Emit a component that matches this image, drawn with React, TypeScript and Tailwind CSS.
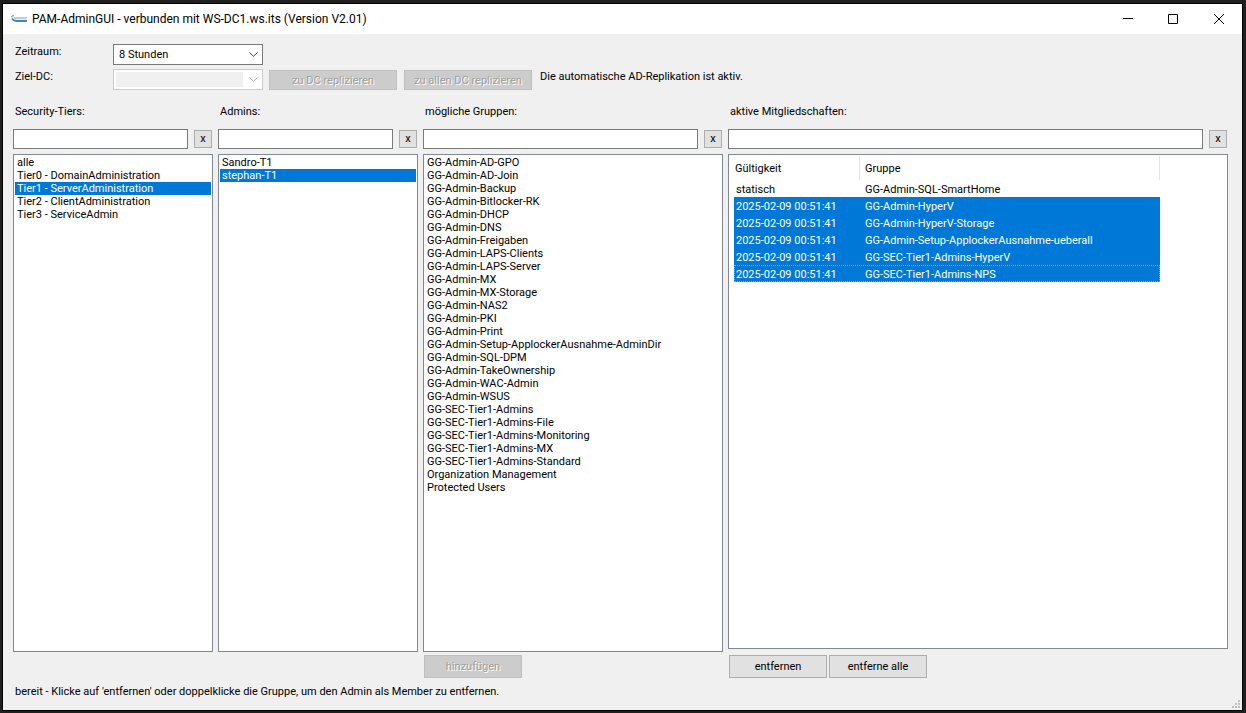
import React, { useState } from 'react'
import clsx from 'clsx'

const tiers = [
  'alle',
  'Tier0 - DomainAdministration',
  'Tier1 - ServerAdministration',
  'Tier2 - ClientAdministration',
  'Tier3 - ServiceAdmin',
]

const admins = ['Sandro-T1', 'stephan-T1']

const groups = [
  'GG-Admin-AD-GPO',
  'GG-Admin-AD-Join',
  'GG-Admin-Backup',
  'GG-Admin-Bitlocker-RK',
  'GG-Admin-DHCP',
  'GG-Admin-DNS',
  'GG-Admin-Freigaben',
  'GG-Admin-LAPS-Clients',
  'GG-Admin-LAPS-Server',
  'GG-Admin-MX',
  'GG-Admin-MX-Storage',
  'GG-Admin-NAS2',
  'GG-Admin-PKI',
  'GG-Admin-Print',
  'GG-Admin-Setup-ApplockerAusnahme-AdminDir',
  'GG-Admin-SQL-DPM',
  'GG-Admin-TakeOwnership',
  'GG-Admin-WAC-Admin',
  'GG-Admin-WSUS',
  'GG-SEC-Tier1-Admins',
  'GG-SEC-Tier1-Admins-File',
  'GG-SEC-Tier1-Admins-Monitoring',
  'GG-SEC-Tier1-Admins-MX',
  'GG-SEC-Tier1-Admins-Standard',
  'Organization Management',
  'Protected Users',
]

const memberships = [
  { validUntil: 'statisch', group: 'GG-Admin-SQL-SmartHome' },
  { validUntil: '2025-02-09 00:51:41', group: 'GG-Admin-HyperV' },
  { validUntil: '2025-02-09 00:51:41', group: 'GG-Admin-HyperV-Storage' },
  { validUntil: '2025-02-09 00:51:41', group: 'GG-Admin-Setup-ApplockerAusnahme-ueberall' },
  { validUntil: '2025-02-09 00:51:41', group: 'GG-SEC-Tier1-Admins-HyperV' },
  { validUntil: '2025-02-09 00:51:41', group: 'GG-SEC-Tier1-Admins-NPS' },
]

const App: React.FC = () => {
  return (
    <div className="h-screen bg-[#1f1f1f] pt-[3px] pr-[3px] pb-[2px] pl-[2px] font-['Roboto','Liberation_Sans',sans-serif] text-[11px] leading-[13px] text-black">
      <div className="relative flex h-full flex-col border border-black bg-[#f0f0f0]">
        <TitleBar />

        <main className="flex min-h-0 flex-1 flex-col pt-2.5 pr-3.5 pb-3 pl-2.5">
          <Toolbar />

          <div className="mt-3.5 grid min-h-0 flex-1 grid-cols-[2fr_2fr_3fr_5fr] gap-[5px]">
            <Column id="tiers" label="Security-Tiers:">
              <ListBox label="Security-Tiers" items={tiers} initial="Tier1 - ServerAdministration" />
            </Column>
            <Column id="admins" label="Admins:">
              <ListBox label="Admins" items={admins} initial="stephan-T1" />
            </Column>
            <Column
              id="groups"
              label="mögliche Gruppen:"
              actions={<ActionButton disabled>hinzufügen</ActionButton>}
            >
              <ListBox label="mögliche Gruppen" items={groups} />
            </Column>
            <Column
              id="memberships"
              label="aktive Mitgliedschaften:"
              actions={
                <>
                  <ActionButton>entfernen</ActionButton>
                  <ActionButton>entferne alle</ActionButton>
                </>
              }
            >
              <MembershipTable />
            </Column>
          </div>

          <p className="mt-[7px] pl-0.5">
            bereit - Klicke auf 'entfernen' oder doppelklicke die Gruppe, um den Admin als Member zu entfernen.
          </p>
        </main>

        <svg className="absolute right-0.5 bottom-0.5 h-2 w-2 fill-[#bfbfbf]" viewBox="0 0 8 8" aria-hidden="true">
          <path d="M6 0h2v2H6zM3 3h2v2H3zM6 3h2v2H6zM0 6h2v2H0zM3 6h2v2H3zM6 6h2v2H6z" />
        </svg>
      </div>
    </div>
  )
}

const TitleBar: React.FC = () => {
  return (
    <header className="flex h-[30px] shrink-0 items-center bg-white pl-2">
      <svg className="h-4 w-4" viewBox="0 0 16 16" fill="none" aria-hidden="true">
        <path d="M3 7H16" stroke="#c3ccd4" strokeWidth="2" />
        <path d="M2 8.5H16" stroke="#e4eef6" />
        <path d="M1 7.5Q2.5 10 5 10H16" stroke="#3d87c6" strokeWidth="2" />
        <path d="M0.5 6.5Q1 4.5 3 4.5" stroke="#8cc63f" strokeWidth="1.5" />
      </svg>
      <h1 className="ml-[5px] flex-1 text-[12px] leading-4">
        PAM-AdminGUI - verbunden mit WS-DC1.ws.its (Version V2.01)
      </h1>
      <div className="flex h-full">
        <CaptionButton label="Minimieren" path="M1 4.5h10" />
        <CaptionButton label="Maximieren" path="M0.5 0.5h9v9h-9z" />
        <CaptionButton label="Schließen" path="M0 0l10 10M10 0L0 10" />
      </div>
    </header>
  )
}

interface CaptionButtonProps {
  label: string
  path: string
}

const CaptionButton: React.FC<CaptionButtonProps> = ({ label, path }) => {
  return (
    <button type="button" aria-label={label} className="flex w-[46px] items-center justify-center">
      <svg className="h-2.5 w-2.5 overflow-visible" viewBox="0 0 10 10" fill="none" stroke="black">
        <path d={path} />
      </svg>
    </button>
  )
}

const Toolbar: React.FC = () => {
  return (
    <div className="flex flex-col gap-1">
      <div className="flex h-[21px]">
        <label htmlFor="period" className="w-[100px] pt-px pl-0.5">Zeitraum:</label>
        <ComboBox id="period" options={['8 Stunden']} />
      </div>
      <div className="flex h-[21px]">
        <label htmlFor="target-dc" className="w-[100px] pt-px pl-0.5">Ziel-DC:</label>
        <ComboBox id="target-dc" options={[]} disabled />
        <div className="ml-1.5 flex h-5 gap-[7px] self-end">
          <ReplicateButton>zu DC replizieren</ReplicateButton>
          <ReplicateButton>zu allen DC replizieren</ReplicateButton>
        </div>
        <p className="ml-2 pt-px">Die automatische AD-Replikation ist aktiv.</p>
      </div>
    </div>
  )
}

interface ComboBoxProps {
  id: string
  options: string[]
  disabled?: boolean
}

const ComboBox: React.FC<ComboBoxProps> = ({ id, options, disabled }) => {
  return (
    <div
      className={clsx(
        'relative w-[150px] border bg-white',
        disabled ? 'border-[#cccccc] p-0.5 pr-[19px]' : 'border-[#7a7a7a]',
      )}
    >
      <select
        id={id}
        disabled={disabled}
        className="block h-full w-full appearance-none pl-[5px] outline-none disabled:bg-[#f0f0f0]"
      >
        {options.map((option) => (
          <option key={option}>{option}</option>
        ))}
      </select>
      <svg
        className={clsx(
          'pointer-events-none absolute top-[7px] right-1 h-[5px] w-[9px] fill-none',
          disabled ? 'stroke-[#b0b0b0]' : 'stroke-[#444444]',
        )}
        viewBox="0 0 9 5"
      >
        <path d="M0.5 0.5L4.5 4.3L8.5 0.5" />
      </svg>
    </div>
  )
}

const disabledStyle = 'disabled:border-[#bfbfbf] disabled:bg-[#cccccc] disabled:text-[#a0a0a0] disabled:[text-shadow:1px_1px_0_white]'

const ReplicateButton: React.FC<{ children: React.ReactNode }> = ({ children }) => {
  return (
    <button type="button" disabled className={clsx('w-32 border whitespace-nowrap', disabledStyle)}>
      {children}
    </button>
  )
}

interface ActionButtonProps {
  disabled?: boolean
  children: React.ReactNode
}

const ActionButton: React.FC<ActionButtonProps> = ({ disabled, children }) => {
  return (
    <button
      type="button"
      disabled={disabled}
      className={clsx('h-[23px] w-[98px] border border-[#adadad] bg-[#e1e1e1]', disabledStyle)}
    >
      {children}
    </button>
  )
}

interface ColumnProps {
  id: string
  label: string
  actions?: React.ReactNode
  children: React.ReactNode
}

const Column: React.FC<ColumnProps> = ({ id, label, actions, children }) => {
  const [filter, setFilter] = useState('')

  return (
    <section className="flex min-h-0 min-w-0 flex-col">
      <label htmlFor={id} className="pt-px pl-0.5">{label}</label>
      <div className="mt-[11px] mb-[5px] flex items-center pr-px">
        <input
          id={id}
          type="text"
          value={filter}
          onChange={(e) => setFilter(e.target.value)}
          className="h-5 min-w-0 flex-1 border border-[#7a7a7a] bg-white px-1 outline-none"
        />
        <button
          type="button"
          aria-label={`Filter ${label} leeren`}
          onClick={() => setFilter('')}
          className="ml-1.5 h-[18px] w-[18px] border border-[#adadad] bg-[#e1e1e1] leading-4"
        >
          x
        </button>
      </div>
      {children}
      <div className="mt-[3px] flex h-[23px] shrink-0 gap-0.5 pl-px">{actions}</div>
    </section>
  )
}

interface ListBoxProps {
  label: string
  items: string[]
  initial?: string
}

const ListBox: React.FC<ListBoxProps> = ({ label, items, initial }) => {
  const [selected, setSelected] = useState(initial)

  return (
    <div
      role="listbox"
      aria-label={label}
      className="flex min-h-0 flex-1 flex-col overflow-hidden border border-[#828790] bg-white p-px"
    >
      {items.map((item) => (
        <button
          key={item}
          type="button"
          role="option"
          aria-selected={item === selected}
          onClick={() => setSelected(item)}
          className="h-[13px] shrink-0 px-0.5 pt-px text-left leading-3 whitespace-nowrap aria-selected:bg-[#0078d7] aria-selected:text-white"
        >
          {item}
        </button>
      ))}
    </div>
  )
}

const MembershipTable: React.FC = () => {
  return (
    <div className="mb-[3px] min-h-0 flex-1 overflow-hidden border border-[#828790] bg-white pt-px pl-[5px]">
      <table className="w-[426px] table-fixed border-separate border-spacing-0 text-left">
        <thead>
          <tr className="h-6">
            <th className="w-[126px] border-r border-[#e5e5e5] py-0 pl-px font-normal">Gültigkeit</th>
            <th className="border-r border-[#e5e5e5] py-0 pl-[5px] font-normal">Gruppe</th>
          </tr>
        </thead>
        <tbody>
          {memberships.map((row, index) => (
            <tr
              key={row.group}
              className={clsx(
                'h-[17px]',
                index > 0 && 'bg-[#0078d7] text-white',
                index === memberships.length - 1 && 'outline-1 -outline-offset-1 outline-[#ff8728] outline-dotted',
              )}
            >
              <td className="pt-0.5 pb-0 pl-0.5">{row.validUntil}</td>
              <td className="pt-0.5 pb-0 pl-[5px]">{row.group}</td>
            </tr>
          ))}
        </tbody>
      </table>
    </div>
  )
}

export default App
